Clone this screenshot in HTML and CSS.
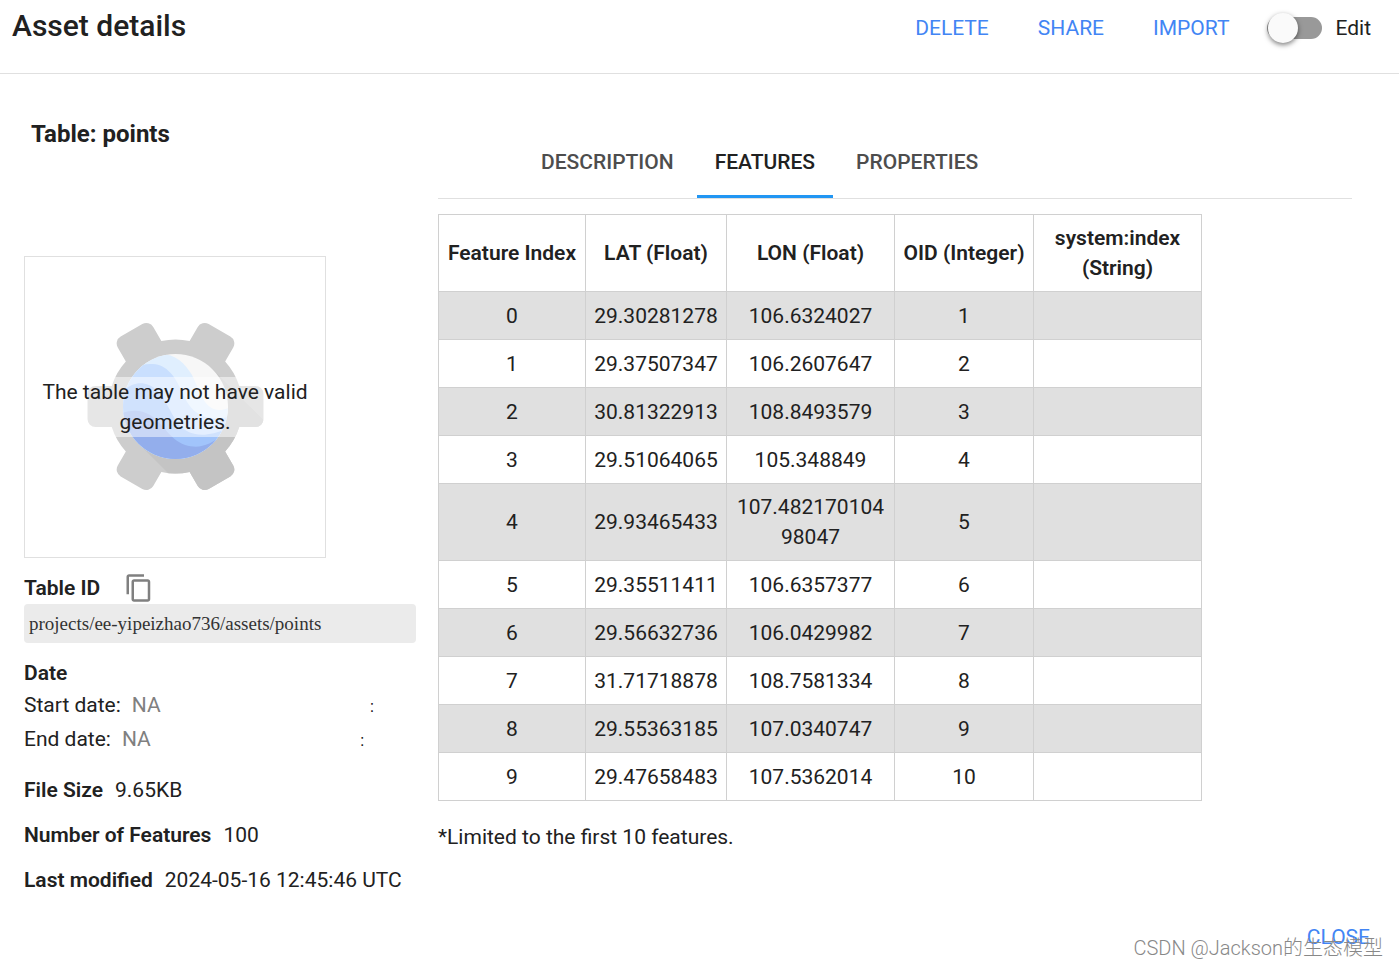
FILE: index.html
```html
<!DOCTYPE html>
<html lang="en">
<head>
<meta charset="utf-8">
<title>Asset details</title>
<link rel="stylesheet" href="styles.css">
</head>
<body>
<header class="topbar">
  <h1 class="topbar-title">Asset details</h1>
  <div class="actions">
    <button class="link-button" type="button">DELETE</button>
    <button class="link-button" type="button">SHARE</button>
    <button class="link-button" type="button">IMPORT</button>
    <label class="switch"><input class="switch-input" type="checkbox" role="switch">Edit</label>
  </div>
</header>
<main class="content">
  <section class="summary">
    <h2 class="summary-title">Table: points</h2>
    <div class="preview">
      <svg class="preview-art" viewBox="0 0 300 300" aria-hidden="true">
        <defs>
          <clipPath id="gear">
            <circle cx="150.5" cy="149.5" r="67"/>
            <rect x="62.5" y="129" width="176" height="41" rx="8"/>
            <rect x="62.5" y="129" width="176" height="41" rx="8" transform="rotate(60 150.5 149.5)"/>
            <rect x="62.5" y="129" width="176" height="41" rx="8" transform="rotate(120 150.5 149.5)"/>
          </clipPath>
          <clipPath id="globe"><circle cx="150.5" cy="149.5" r="52.5"/></clipPath>
        </defs>
        <g clip-path="url(#gear)">
          <rect width="300" height="300" fill="#cdcdcd"/>
          <path d="M187.6 112.2L300 224.6V300H227L113.4 186.4Z" fill="#c4c4c4"/>
        </g>
        <g clip-path="url(#globe)">
          <rect width="300" height="300" fill="#f7f7f7"/>
          <path d="M90 97H136C150 97 160 106 167 118C175 134 178 148 189 152C195 154 200 153 210 148V210H90Z" fill="#e0effe"/>
          <path d="M90 128C100 112 114 106 128 107C142 108 150 119 157 135C165 154 178 168 210 158V210H90Z" fill="#c9dffe"/>
          <path d="M90 144C102 126 114 124 124 128C138 134 144 154 154 168C166 180 182 182 210 168V210H90Z" fill="#a1c4fb"/>
          <path d="M90 160C102 152 115 152 125 158C138 166 144 182 160 188C174 192 184 189 200 176V210H90Z" fill="#93aeec"/>
        </g>
      </svg>
      <p class="preview-message">The table may not have valid geometries.</p>
    </div>
    <div class="id-heading">
      <h3 class="label">Table ID</h3>
      <button class="copy-button" type="button" aria-label="Copy table ID">
        <svg class="copy-icon" viewBox="0 0 24 24" aria-hidden="true"><path fill="#808080" d="M16 1H4C2.900 1 2 1.900 2 3v14h2V3h12V1zm3 4H8C6.900 5 6 5.900 6 7v14c0 1.100.9 2 2 2h11c1.100 0 2-.9 2-2V7c0-1.100-.9-2-2-2zm0 16H8V7h11v14z"/></svg>
      </button>
    </div>
    <div class="asset-id">projects/ee-yipeizhao736/assets/points</div>
    <h3 class="label">Date</h3>
    <div class="date-row"><span>Start date:</span><span class="date-value">NA</span><span class="time-mark">:</span></div>
    <div class="date-row"><span>End date:</span><span class="date-value">NA</span><span class="time-mark">:</span></div>
    <dl class="facts">
      <div class="fact"><dt class="label">File Size</dt><dd class="fact-value">9.65KB</dd></div>
      <div class="fact"><dt class="label">Number of Features</dt><dd class="fact-value">100</dd></div>
      <div class="fact"><dt class="label">Last modified</dt><dd class="fact-value">2024-05-16 12:45:46 UTC</dd></div>
    </dl>
  </section>
  <section class="details">
    <div class="tabs" role="tablist">
      <button class="tab" type="button" role="tab">DESCRIPTION</button>
      <button class="tab tab-active" type="button" role="tab" aria-selected="true">FEATURES</button>
      <button class="tab" type="button" role="tab">PROPERTIES</button>
    </div>
    <table class="features">
      <colgroup><col class="col-index"><col class="col-lat"><col class="col-wide"><col class="col-oid"><col class="col-wide"></colgroup>
      <thead>
        <tr><th>Feature Index</th><th>LAT (Float)</th><th>LON (Float)</th><th>OID (Integer)</th><th>system:index (String)</th></tr>
      </thead>
      <tbody>
        <tr><td>0</td><td>29.30281278</td><td>106.6324027</td><td>1</td><td></td></tr>
        <tr><td>1</td><td>29.37507347</td><td>106.2607647</td><td>2</td><td></td></tr>
        <tr><td>2</td><td>30.81322913</td><td>108.8493579</td><td>3</td><td></td></tr>
        <tr><td>3</td><td>29.51064065</td><td>105.348849</td><td>4</td><td></td></tr>
        <tr><td>4</td><td>29.93465433</td><td>107.48217010498047</td><td>5</td><td></td></tr>
        <tr><td>5</td><td>29.35511411</td><td>106.6357377</td><td>6</td><td></td></tr>
        <tr><td>6</td><td>29.56632736</td><td>106.0429982</td><td>7</td><td></td></tr>
        <tr><td>7</td><td>31.71718878</td><td>108.7581334</td><td>8</td><td></td></tr>
        <tr><td>8</td><td>29.55363185</td><td>107.0340747</td><td>9</td><td></td></tr>
        <tr><td>9</td><td>29.47658483</td><td>107.5362014</td><td>10</td><td></td></tr>
      </tbody>
    </table>
    <p class="note">*Limited to the first 10 features.</p>
  </section>
</main>
<footer class="footer">
  <button class="link-button" type="button">CLOSE</button>
  <div class="watermark">CSDN @Jackson的生态模型</div>
</footer>
</body>
</html>
```

FILE: styles.css
```css
* {
  box-sizing: border-box;
}

body {
  margin: 0;
  min-height: 100vh;
  display: flex;
  flex-direction: column;
  background: #fff;
  color: #212121;
  font: 21px/30px Roboto, "Liberation Sans", sans-serif;
}

h1, h2, h3, p, dl, dd {
  margin: 0;
}

button {
  padding: 0;
  border: 0;
  background: none;
  color: inherit;
  font: inherit;
  cursor: pointer;
}

.topbar {
  display: flex;
  justify-content: space-between;
  align-items: flex-start;
  height: 74px;
  padding: 8px 28px 0 12px;
  border-bottom: 1px solid #e0e0e0;
}

.topbar-title {
  font-size: 30px;
  line-height: 36px;
  font-weight: 500;
}

.actions {
  display: flex;
  align-items: center;
  gap: 49px;
  height: 40px;
}

.link-button {
  color: #4285f4;
}

.switch {
  display: flex;
  align-items: center;
  gap: 13px;
  margin-left: -11px;
}

.switch-input {
  appearance: none;
  position: relative;
  width: 55px;
  height: 22px;
  margin: 0;
  border-radius: 11px;
  background: #999;
}

.switch-input::before {
  content: "";
  position: absolute;
  top: -4px;
  left: 1px;
  width: 30px;
  height: 30px;
  border-radius: 50%;
  background: #fafafa;
  box-shadow: 0 2px 5px rgba(0, 0, 0, 0.5);
}

.content {
  display: grid;
  grid-template-columns: 392px 1fr;
  gap: 22px;
  padding: 44px 47px 0 24px;
}

.summary-title {
  padding-left: 7px;
  font-size: 24px;
  line-height: 32px;
  font-weight: 700;
}

.preview {
  display: grid;
  place-items: center;
  width: 302px;
  height: 302px;
  margin-top: 106px;
  border: 1px solid #e0e0e0;
}

.preview-art,
.preview-message {
  grid-area: 1 / 1;
}

.preview-art {
  width: 300px;
  height: 300px;
}

.preview-message {
  z-index: 1;
  width: 100%;
  padding: 0 15px;
  background: rgba(255, 255, 255, 0.5);
  text-align: center;
}

.label {
  font-size: 21px;
  line-height: 30px;
  font-weight: 600;
}

.id-heading {
  display: flex;
  align-items: center;
  gap: 24px;
  margin-top: 15px;
}

.copy-button,
.copy-icon {
  display: block;
  width: 30px;
  height: 30px;
}

.asset-id {
  margin: 1px 0 15px;
  padding: 5px 5px 4px;
  border-radius: 4px;
  background: #ebebeb;
  color: #333;
  font-family: "Liberation Serif", serif;
  font-size: 19px;
}

.date-row {
  display: flex;
  align-items: baseline;
  gap: 11px;
  padding-top: 2px;
}

.date-value {
  width: 227px;
  color: #808080;
}

.time-mark {
  font-family: "Liberation Sans", sans-serif;
  font-size: 16px;
}

.facts {
  display: grid;
  gap: 15px;
  margin-top: 19px;
}

.fact {
  display: flex;
  gap: 12px;
}

.details {
  padding-top: 8px;
}

.tabs {
  display: flex;
  gap: 5px;
  padding-left: 85px;
  border-bottom: 1px solid #e0e0e0;
}

.tab {
  padding: 21px 18px 18px;
  border-bottom: 3px solid transparent;
  color: #4d4d4d;
  font-weight: 500;
}

.tab-active {
  border-bottom-color: #2196f3;
  color: #212121;
}

.features {
  table-layout: fixed;
  width: 764px;
  margin-top: 15px;
  border-collapse: collapse;
  text-align: center;
}

.col-index {
  width: 147px;
}

.col-lat {
  width: 141px;
}

.col-wide {
  width: 168px;
}

.col-oid {
  width: 139px;
}

.features th,
.features td {
  height: 48px;
  padding: 8px;
  border: 1px solid #d0d0d0;
  overflow-wrap: anywhere;
}

.features th {
  font-weight: 600;
}

.features tbody tr:nth-child(odd) {
  background: #e0e0e0;
}

.note {
  margin-top: 21px;
}

.footer {
  position: relative;
  display: flex;
  justify-content: flex-end;
  margin-top: auto;
  padding: 0 29px 15px 0;
}

.watermark {
  position: absolute;
  right: 16px;
  bottom: 4px;
  color: #888;
  font-family: Roboto, "Noto Sans CJK SC", sans-serif;
  font-size: 20px;
  font-weight: 300;
  pointer-events: none;
}
```
